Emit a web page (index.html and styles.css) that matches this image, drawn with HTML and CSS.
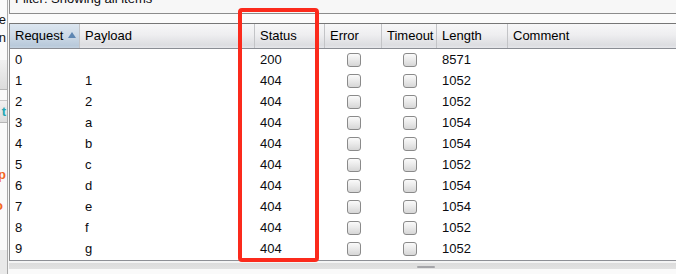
FILE: index.html
```html
<!DOCTYPE html>
<html>
<head>
<meta charset="utf-8">
<link rel="stylesheet" href="styles.css">
</head>
<body>
<div class="app">
  <aside class="side">
    <div class="side-label lbl-e">Type</div>
    <div class="side-label lbl-n">Position</div>
    <div class="side-btn btn-a"></div>
    <div class="side-btn btn-b"><span class="teal">t</span></div>
    <div class="side-label lbl-p">p</div>
    <div class="side-label lbl-o">o</div>
    <div class="side-foot"></div>
  </aside>
  <main class="main">
    <div class="filter"><span class="filter-text">Filter: Showing all items</span></div>
    <div class="gap"></div>
    <div class="grid">
      <div class="row head">
        <div class="th sel">Request<span class="sort"></span></div>
        <div class="th">Payload</div>
        <div class="th">Status</div>
        <div class="th">Error</div>
        <div class="th">Timeout</div>
        <div class="th">Length</div>
        <div class="th last">Comment</div>
      </div>
      <div class="row"><div class="td">0</div><div class="td"></div><div class="td">200</div><div class="td cb"><span class="box"></span></div><div class="td cb"><span class="box"></span></div><div class="td">8571</div><div class="td"></div></div>
      <div class="row"><div class="td">1</div><div class="td">1</div><div class="td">404</div><div class="td cb"><span class="box"></span></div><div class="td cb"><span class="box"></span></div><div class="td">1052</div><div class="td"></div></div>
      <div class="row"><div class="td">2</div><div class="td">2</div><div class="td">404</div><div class="td cb"><span class="box"></span></div><div class="td cb"><span class="box"></span></div><div class="td">1052</div><div class="td"></div></div>
      <div class="row"><div class="td">3</div><div class="td">a</div><div class="td">404</div><div class="td cb"><span class="box"></span></div><div class="td cb"><span class="box"></span></div><div class="td">1054</div><div class="td"></div></div>
      <div class="row"><div class="td">4</div><div class="td">b</div><div class="td">404</div><div class="td cb"><span class="box"></span></div><div class="td cb"><span class="box"></span></div><div class="td">1054</div><div class="td"></div></div>
      <div class="row"><div class="td">5</div><div class="td">c</div><div class="td">404</div><div class="td cb"><span class="box"></span></div><div class="td cb"><span class="box"></span></div><div class="td">1052</div><div class="td"></div></div>
      <div class="row"><div class="td">6</div><div class="td">d</div><div class="td">404</div><div class="td cb"><span class="box"></span></div><div class="td cb"><span class="box"></span></div><div class="td">1054</div><div class="td"></div></div>
      <div class="row"><div class="td">7</div><div class="td">e</div><div class="td">404</div><div class="td cb"><span class="box"></span></div><div class="td cb"><span class="box"></span></div><div class="td">1054</div><div class="td"></div></div>
      <div class="row"><div class="td">8</div><div class="td">f</div><div class="td">404</div><div class="td cb"><span class="box"></span></div><div class="td cb"><span class="box"></span></div><div class="td">1052</div><div class="td"></div></div>
      <div class="row"><div class="td">9</div><div class="td">g</div><div class="td">404</div><div class="td cb"><span class="box"></span></div><div class="td cb"><span class="box"></span></div><div class="td">1052</div><div class="td"></div></div>
    </div>
    <div class="divider"><span class="grip"></span></div>
  </main>
  <div class="highlight"></div>
</div>
</body>
</html>
```
FILE: styles.css
```css
* { box-sizing: border-box; }
html, body {
  margin: 0;
  padding: 0;
  width: 676px;
  height: 274px;
  overflow: hidden;
  background: #f7f7f7;
  font-family: "Liberation Sans", Arial, sans-serif;
  font-size: 13px;
  color: #0b0b10;
}
.app {
  position: relative;
  display: flex;
  width: 676px;
  height: 274px;
}
.side {
  width: 8px;
  flex: none;
  display: flex;
  flex-direction: column;
  background: #fafafa;
  overflow: hidden;
  border-right: 1px solid #a9a9a9;
  margin-right: 1px;
}
.side-label {
  white-space: nowrap;
  direction: rtl;
  text-align: right;
  width: 6px;
  overflow: hidden;
  line-height: 15px;
  height: 15px;
  color: #111;
}
.lbl-e { margin-top: 12px; }
.lbl-n { margin-top: 3px; }
.side-btn {
  background: linear-gradient(#f1f1f1, #dcdcdc);
  border-bottom: 1px solid #b5b5b5;
}
.btn-a { margin-top: 15px; height: 30px; }
.btn-b {
  margin-top: 10px;
  height: 23px;
  border-top: 1px solid #c8c8c8;
  display: flex;
  align-items: center;
  justify-content: flex-end;
}
.teal { color: #22a6b3; font-weight: bold; margin-right: 1px; }
.lbl-p { margin-top: 44px; color: #f26522; font-weight: bold; }
.lbl-o { margin-top: 16px; color: #f26522; font-weight: bold; width: 3px; }
.side-foot {
  margin-top: auto;
  height: 24px;
  background: #e9e9e9;
}
.main {
  flex: 1;
  display: flex;
  flex-direction: column;
  min-width: 0;
  margin-left: 0;
}
.filter {
  height: 14px;
  border-left: 1px solid #8c8c8c;
  border-bottom: 1px solid #8c8c8c;
  background: #f7f7f7;
  overflow: hidden;
  padding-left: 5px;
}
.filter-text {
  display: block;
  margin-top: -9px;
  line-height: 15px;
  white-space: nowrap;
}
.gap {
  height: 9px;
  background: #fbfbfb;
}
.grid {
  border-top: 1px solid #767676;
  border-left: 1px solid #8c8c8c;
  border-bottom: 1px solid #8e9096;
  background: #fff;
  padding-bottom: 1px;
}
.row {
  display: grid;
  grid-template-columns: 70px 175px 70px 57px 55px 71px 1fr;
  height: 21px;
  align-items: center;
}
.head {
  height: 25px;
  border-bottom: 1px solid #8a8d94;
  background: linear-gradient(#f7f7f8 0%, #eeeef0 45%, #dcdde1 88%, #e6e7ea 100%);
  align-items: stretch;
}
.th {
  border-right: 1px solid #c3c4c7;
  padding-left: 5px;
  line-height: 24px;
  white-space: nowrap;
  position: relative;
  color: #000;
}
.th.last { border-right: none; }
.th.sel {
  background: linear-gradient(#dce6f0 0%, #ccd9e6 50%, #b9cadb 90%, #c4d2e0 100%);
}
.sort {
  position: absolute;
  left: 58px;
  top: 8px;
  width: 0;
  height: 0;
  border-left: 4px solid transparent;
  border-right: 4px solid transparent;
  border-bottom: 6px solid #5d86b2;
}
.td {
  padding-left: 5px;
  line-height: 21px;
  white-space: nowrap;
}
.td.cb {
  padding-left: 0;
  display: flex;
  justify-content: center;
  align-items: center;
}
.box {
  width: 14px;
  height: 14px;
  border: 1px solid #8a8a8a;
  border-radius: 3px;
  background: linear-gradient(#fafafa 0%, #ebebeb 45%, #d6d6d6 100%);
}
.divider {
  flex: 1;
  position: relative;
  background: linear-gradient(#f4f4f4 0px, #f4f4f4 2px, #dcdcdc 2px, #e2e2e2 8px, #fafafa 8px);
}
.grip {
  position: absolute;
  left: 408px;
  top: 5px;
  width: 18px;
  height: 2px;
  border-radius: 1px;
  background: #a4a4a8;
}
.highlight {
  position: absolute;
  left: 238px;
  top: 8px;
  width: 81px;
  height: 254px;
  border: 4px solid #fb2a1c;
  border-radius: 4px;
}
```
